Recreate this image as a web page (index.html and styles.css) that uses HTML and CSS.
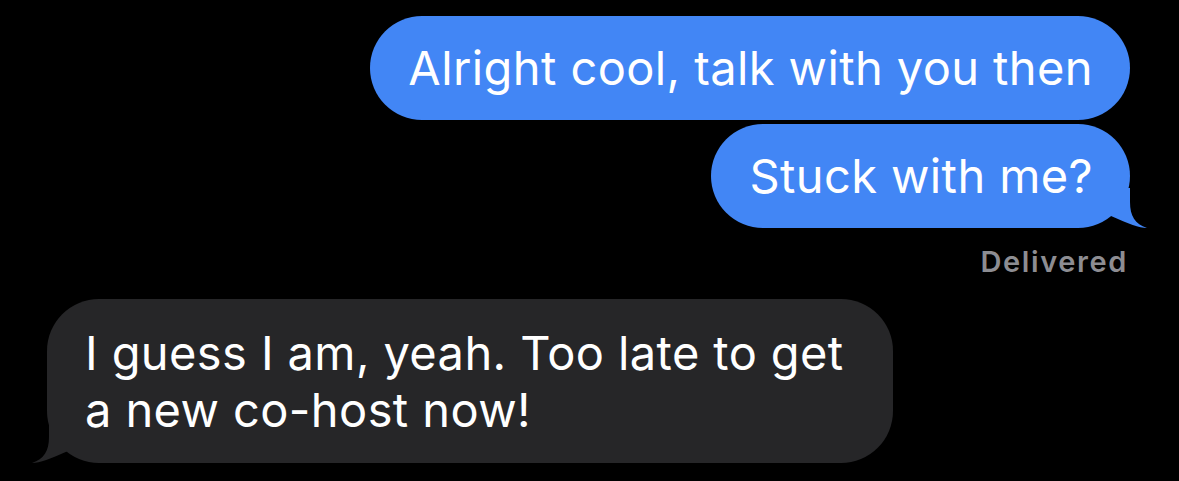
FILE: index.html
```html
<!DOCTYPE html>
<html lang="en">

<head>
  <meta charset="UTF-8" />
  <meta name="viewport" content="width=device-width, initial-scale=1.0" />
  <title>Messages</title>
  <link rel="stylesheet" href="styles.css">
</head>

<body>
  <div class="thread">
    <div class="msg sent">Alright cool, talk with you then</div>
    <div class="msg sent has-tail">
      Stuck with me?
      <svg class="tail" viewBox="0 0 40 40" aria-hidden="true">
        <path d="M23 0 L23 14 C23 28 28 36 40 40 C32 40 22 36 4 28 L4 0 Z" />
      </svg>
    </div>
    <div class="status">Delivered</div>
    <div class="msg received has-tail">
      I guess I am, yeah. Too late to get a new co-host now!
      <svg class="tail" viewBox="0 0 40 40" aria-hidden="true">
        <path d="M23 0 L23 14 C23 28 28 36 40 40 C32 40 22 36 4 28 L4 0 Z" />
      </svg>
    </div>
  </div>
</body>

</html>
```

FILE: styles.css
```css
html,
body {
  margin: 0;
  padding: 0;
  height: 100%;
}

body {
  background: #000;
  font-family: Inter, "Noto Sans", sans-serif;
  color: #fff;
  overflow: hidden;
}

.thread {
  display: flex;
  flex-direction: column;
  padding: 16px 49px 0 47px;
}

.msg {
  position: relative;
  font-size: 47px;
  line-height: 57px;
  letter-spacing: 0.4px;
  padding: 23px 37px 24px 38px;
  border-radius: 52px;
  box-sizing: border-box;
}

.msg.sent {
  align-self: flex-end;
  background: #4286f5;
  margin-bottom: 4px;
}

.msg.received {
  align-self: flex-start;
  background: #262628;
  max-width: 846px;
  padding: 25px 38px 25px 38px;
}

.tail {
  position: absolute;
  bottom: 0;
  width: 40px;
  height: 40px;
}

.sent .tail {
  right: -17px;
  fill: #4286f5;
}

.received .tail {
  left: -15px;
  fill: #262628;
  transform: scaleX(-1);
}

.status {
  align-self: flex-end;
  margin: 13px 2px 20px 0;
  font-size: 29px;
  line-height: 34px;
  font-weight: 600;
  letter-spacing: 1.6px;
  color: #8d8d92;
}
```
